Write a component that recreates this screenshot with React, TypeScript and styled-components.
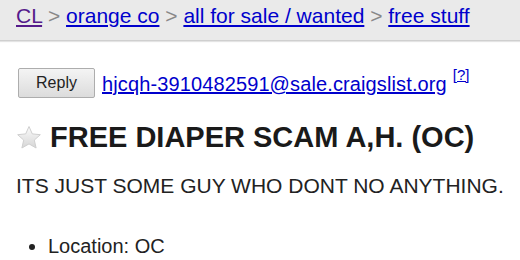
import styled, { createGlobalStyle } from "styled-components";

const GlobalStyle = createGlobalStyle`
  body {
    margin: 0;
    background: #fff;
    font-family: "Liberation Sans", Arial, sans-serif;
    color: #222;
  }
`;

const Crumbs = styled.header`
  background: #eaeaea;
  border-bottom: 1px solid #cfcfcf;
  box-shadow: 0 1px 1px #e4e4e4;
  height: 41px;
  box-sizing: border-box;
  padding: 4px 16px 0;
  font-size: 21px;
  line-height: 24px;
  color: #888;
  white-space: nowrap;
`;

const CrumbLink = styled.a<{ $visited?: boolean }>`
  color: ${(p) => (p.$visited ? "#551a8b" : "#0000cc")};
  text-decoration: underline;
`;

const Body = styled.main`
  padding: 0 16px;
`;

const ReplyRow = styled.div`
  display: flex;
  align-items: center;
  margin-top: 27px;
  white-space: nowrap;
`;

const ReplyButton = styled.button`
  width: 77px;
  height: 30px;
  margin: 0 7px 0 2px;
  padding: 0;
  border: 1px solid #adadad;
  border-radius: 2px;
  background: linear-gradient(#f4f4f4, #dcdcdc);
  font-family: "Liberation Sans", Arial, sans-serif;
  font-size: 16px;
  color: #222;
`;

const Mail = styled.a`
  color: #0000cc;
  font-size: 20px;
  letter-spacing: 0.12px;
  line-height: 24px;
  margin-top: 2px;
`;

const Help = styled.sup`
  font-size: 15px;
  line-height: 16px;
  margin-left: 6px;
  align-self: flex-start;
  margin-top: -1px;
  a {
    color: #0000cc;
  }
`;

const Title = styled.h2`
  display: flex;
  align-items: center;
  gap: 8px;
  margin: 22px 0 0;
  font-size: 29px;
  font-weight: bold;
  line-height: 34px;
  color: #1a1a1a;
  white-space: nowrap;
`;

const Text = styled.p`
  margin: 19px 0 0;
  font-size: 21px;
  line-height: 26px;
  white-space: nowrap;
`;

const Facts = styled.ul`
  margin: 35px 0 0;
  padding-left: 32px;
  font-size: 20px;
  line-height: 24px;
`;

const Star = () => (
  <svg width="26" height="25" viewBox="0 0 26 25">
    <defs>
      <linearGradient id="st" x1="0" y1="0" x2="0" y2="1">
        <stop offset="0" stopColor="#fbfbfb" />
        <stop offset="1" stopColor="#d6d6d6" />
      </linearGradient>
    </defs>
    <path
      d="M13 1.5l3.3 7.4 8 .8-6 5.4 1.8 7.9L13 18.9 5.9 23l1.8-7.9-6-5.4 8-.8z"
      fill="url(#st)"
      stroke="#cfcfcf"
      strokeWidth="1"
      strokeLinejoin="round"
    />
  </svg>
);

export default function App() {
  return (
    <>
      <GlobalStyle />
      <Crumbs>
        <CrumbLink $visited href="#">CL</CrumbLink> &gt;{" "}
        <CrumbLink href="#">orange co</CrumbLink> &gt;{" "}
        <CrumbLink href="#">all for sale / wanted</CrumbLink> &gt;{" "}
        <CrumbLink href="#">free stuff</CrumbLink>
      </Crumbs>
      <Body>
        <ReplyRow>
          <ReplyButton>Reply</ReplyButton>
          <Mail href="#">hjcqh-3910482591@sale.craigslist.org</Mail>
          <Help>
            <a href="#">[?]</a>
          </Help>
        </ReplyRow>
        <Title>
          <Star />
          FREE DIAPER SCAM A,H. (OC)
        </Title>
        <Text>ITS JUST SOME GUY WHO DONT NO ANYTHING.</Text>
        <Facts>
          <li>Location: OC</li>
        </Facts>
      </Body>
    </>
  );
}
